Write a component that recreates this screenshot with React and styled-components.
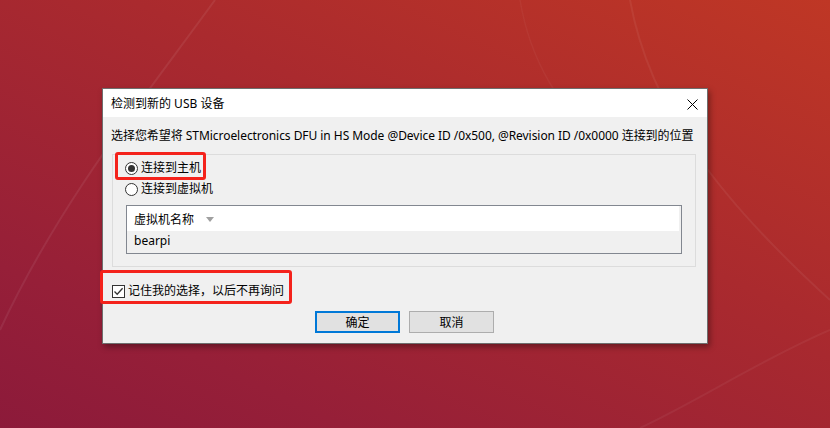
import React from "react";
import styled, { createGlobalStyle } from "styled-components";

const GlobalStyle = createGlobalStyle`
  html, body {
    margin: 0;
    padding: 0;
  }
  body {
    font-family: "Noto Sans", "Noto Sans CJK SC", sans-serif;
    font-size: 12px;
    color: #000;
  }
`;

const UI_FONT = `"Noto Sans", "Noto Sans CJK SC", sans-serif`;

export default function App() {
  return (
    <StyledDesktop>
      <GlobalStyle />
      <Wallpaper />
      <StyledDialog>
        <StyledTitleBar>
          <StyledTitle>检测到新的 USB 设备</StyledTitle>
          <StyledClose aria-label="关闭">
            <svg width="11" height="11" viewBox="0 0 11 11">
              <path d="M0.5 0.5 L10.5 10.5 M10.5 0.5 L0.5 10.5" stroke="#000" strokeWidth="1" />
            </svg>
          </StyledClose>
        </StyledTitleBar>
        <StyledBody>
          <StyledPrompt>
            选择您希望将 STMicroelectronics DFU in HS Mode @Device ID /0x500, @Revision ID /0x0000 连接到的位置
          </StyledPrompt>
          <StyledGroup>
            <StyledHighlight $inset="-8px -5px -4px -10px">
              <RadioOption checked label="连接到主机" />
            </StyledHighlight>
            <RadioOption label="连接到虚拟机" />
            <StyledList>
              <StyledListHeader>
                <span>虚拟机名称</span>
                <StyledSortArrow />
              </StyledListHeader>
              <StyledListRow>bearpi</StyledListRow>
            </StyledList>
          </StyledGroup>
          <StyledCheckRow>
            <StyledHighlight $inset="-13px -8px -5px -12px">
              <StyledOption>
                <StyledCheckbox>
                  <svg width="11" height="11" viewBox="0 0 11 11">
                    <path d="M1.5 5.5 L4.2 8.3 L9.6 2.2" stroke="#333" strokeWidth="1.3" fill="none" />
                  </svg>
                </StyledCheckbox>
                <span>记住我的选择，以后不再询问</span>
              </StyledOption>
            </StyledHighlight>
          </StyledCheckRow>
          <StyledButtons>
            <StyledButton $primary>确定</StyledButton>
            <StyledButton>取消</StyledButton>
          </StyledButtons>
        </StyledBody>
      </StyledDialog>
    </StyledDesktop>
  );
}

const RadioOption = ({ checked, label }) => (
  <StyledOption>
    <StyledRadio $checked={checked} />
    <span>{label}</span>
  </StyledOption>
);

const Wallpaper = () => (
  <StyledWallpaper viewBox="0 0 830 428" preserveAspectRatio="none">
    <path d="M215 0 C 150 90, 60 200, 0 330" stroke="rgba(255,255,255,0.07)" strokeWidth="2" fill="none" />
    <path d="M630 0 C 650 110, 720 200, 830 300" stroke="rgba(255,255,255,0.06)" strokeWidth="2" fill="none" />
    <path d="M830 330 C 760 360, 700 400, 640 428" stroke="rgba(255,255,255,0.05)" strokeWidth="2" fill="none" />
    <path d="M520 0 C 530 60, 560 110, 600 140" stroke="rgba(255,255,255,0.04)" strokeWidth="1.5" fill="none" />
  </StyledWallpaper>
);

const StyledDesktop = styled.div`
  position: relative;
  width: 830px;
  height: 428px;
  overflow: hidden;
  box-sizing: border-box;
  padding: 88px 0 0 102px;
  background: linear-gradient(205deg, #bf3725 0%, #aa2a2e 40%, #961f38 80%, #8c1a3a 100%);
`;

const StyledWallpaper = styled.svg`
  position: absolute;
  inset: 0;
  width: 100%;
  height: 100%;
`;

const StyledDialog = styled.div`
  position: relative;
  width: 606px;
  box-sizing: border-box;
  border: 1px solid #6e6e6e;
  background: #f0f0f0;
  box-shadow: 2px 3px 6px rgba(0, 0, 0, 0.35);
  font-family: ${UI_FONT};
`;

const StyledTitleBar = styled.div`
  display: flex;
  align-items: center;
  justify-content: space-between;
  height: 28px;
  padding: 0 9px 0 8px;
  background: #fff;
`;

const StyledTitle = styled.div`
  font-size: 12px;
  line-height: 16px;
  padding-top: 1px;
`;

const StyledClose = styled.div`
  display: flex;
  align-items: center;
  padding-top: 2px;
`;

const StyledBody = styled.div`
  padding: 11px 9px 10px 8px;
`;

const StyledPrompt = styled.div`
  font-size: 12px;
  line-height: 16px;
  white-space: nowrap;
  letter-spacing: -0.05px;
`;

const StyledGroup = styled.div`
  margin: 10px 0 0 1px;
  width: 584px;
  box-sizing: border-box;
  border: 1px solid #dcdcdc;
  padding: 5px 13px 12px 12px;
  display: flex;
  flex-direction: column;
  align-items: flex-start;
  gap: 5px;
`;

const StyledHighlight = styled.div`
  position: relative;
  &::after {
    content: "";
    position: absolute;
    inset: ${(p) => p.$inset};
    border: 3px solid #f4221b;
    border-radius: 3px;
    pointer-events: none;
  }
`;

const StyledOption = styled.label`
  display: flex;
  align-items: center;
  gap: 3px;
  height: 16px;
  font-size: 12px;
  line-height: 16px;
`;

const StyledRadio = styled.span`
  position: relative;
  width: 13px;
  height: 13px;
  box-sizing: border-box;
  border: 1px solid #333;
  border-radius: 50%;
  background: #fff;
  &::after {
    content: "";
    display: ${(p) => (p.$checked ? "block" : "none")};
    position: absolute;
    inset: 2px;
    border-radius: 50%;
    background: #333;
  }
`;

const StyledCheckbox = styled.span`
  display: flex;
  align-items: center;
  justify-content: center;
  width: 13px;
  height: 13px;
  box-sizing: border-box;
  border: 1px solid #333;
  background: #fff;
`;

const StyledList = styled.div`
  align-self: stretch;
  margin: 3px 0 0 1px;
  height: 49px;
  box-sizing: border-box;
  border: 1px solid #828790;
  background: #f0f0f0;
  padding: 0 2px 0 0;
`;

const StyledListHeader = styled.div`
  display: flex;
  align-items: center;
  gap: 12px;
  height: 25px;
  padding: 0 0 0 7px;
  background: #fff;
  font-size: 12px;
`;

const StyledSortArrow = styled.span`
  width: 0;
  height: 0;
  border-left: 4px solid transparent;
  border-right: 4px solid transparent;
  border-top: 5px solid #a0a0a0;
  margin-top: 1px;
`;

const StyledListRow = styled.div`
  padding: 1px 0 0 7px;
  line-height: 18px;
  font-size: 12px;
`;

const StyledCheckRow = styled.div`
  display: flex;
  margin: 16px 0 0 1px;
`;

const StyledButtons = styled.div`
  display: flex;
  justify-content: center;
  gap: 9px;
  margin: 12px 0 0 0;
`;

const StyledButton = styled.button`
  width: 85px;
  height: 22px;
  box-sizing: border-box;
  padding: 0;
  font-family: ${UI_FONT};
  font-size: 12px;
  color: #000;
  background: #e1e1e1;
  border: ${(p) => (p.$primary ? "2px solid #0078d7" : "1px solid #adadad")};
  border-radius: 0;
`;
